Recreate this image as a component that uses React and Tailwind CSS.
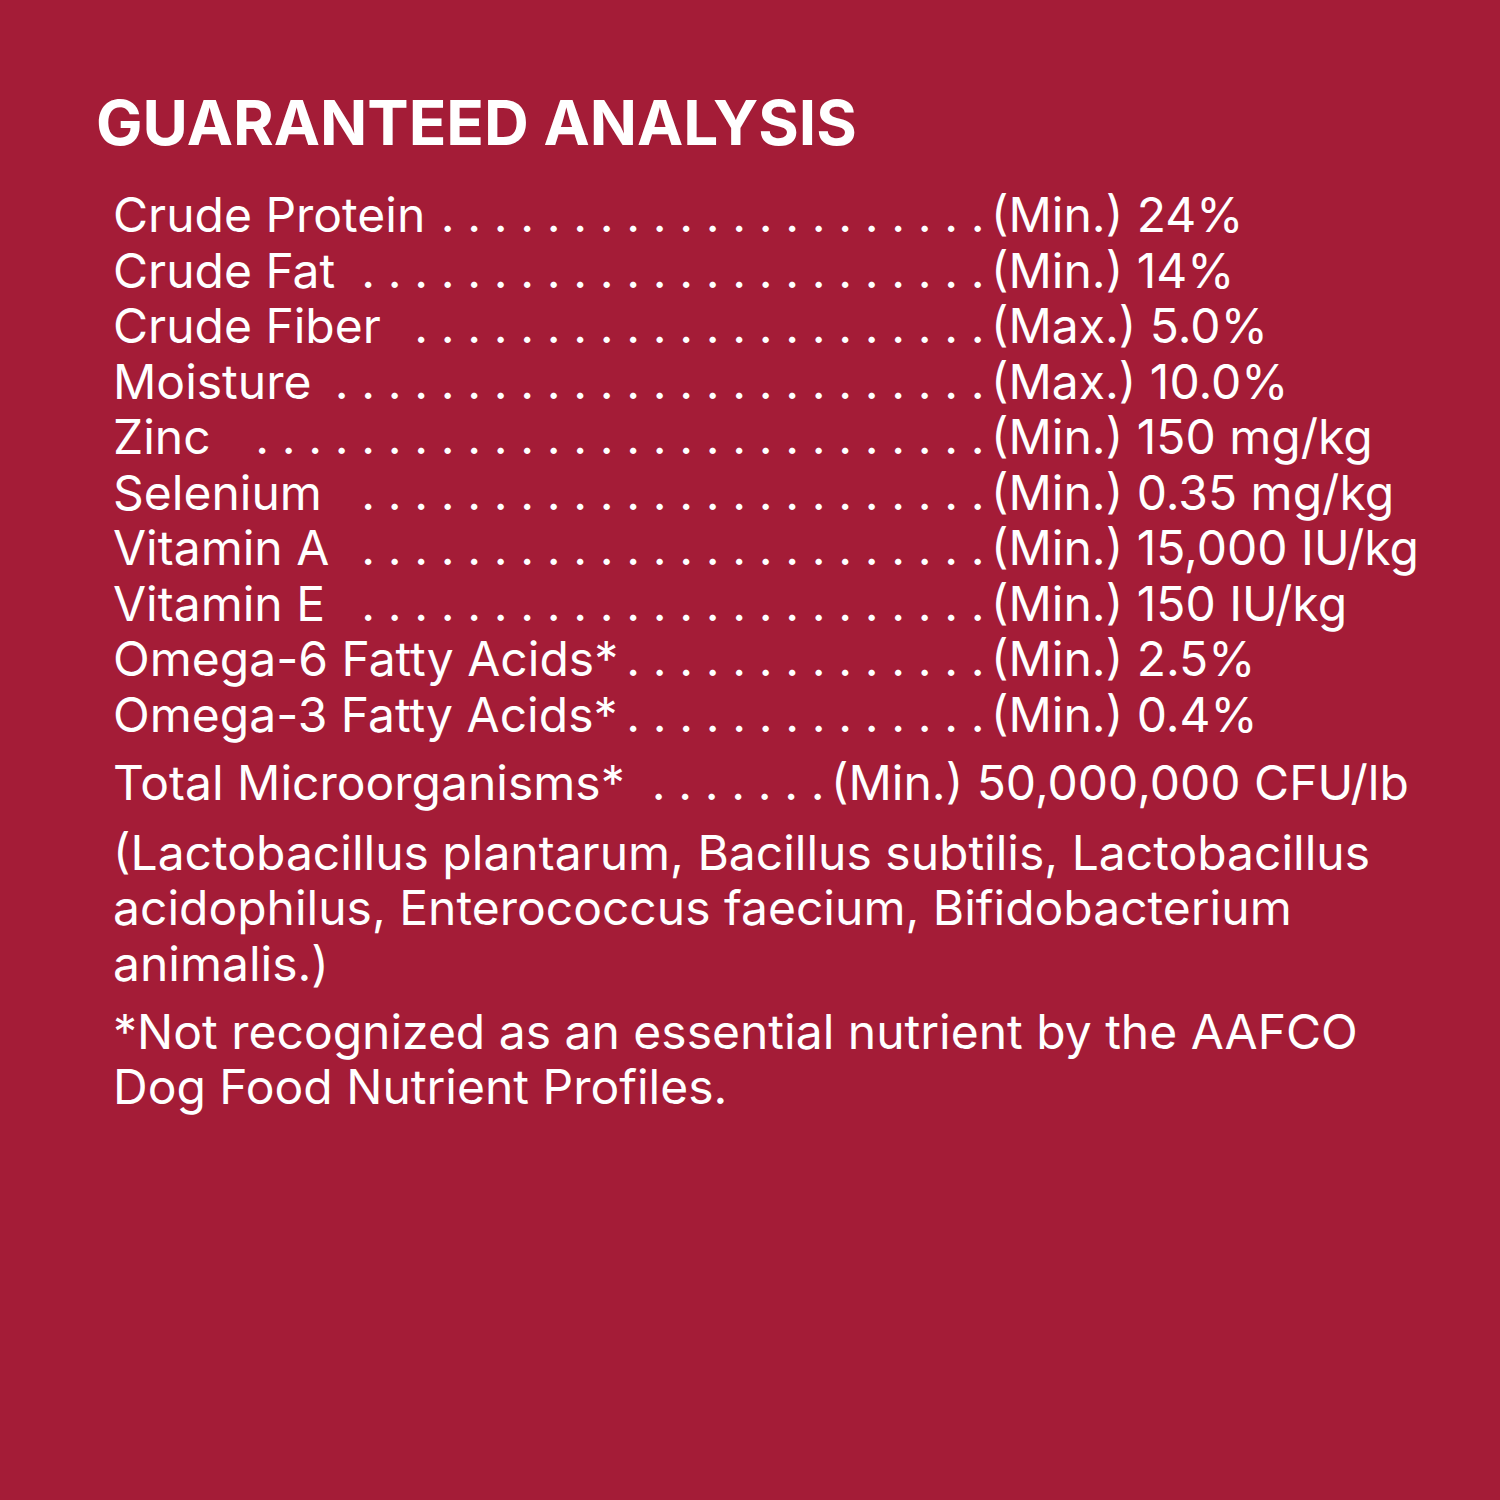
import React from 'react';

const rows = [
  { label: 'Crude Protein', dots: 21, value: '(Min.) 24%' },
  { label: 'Crude Fat', dots: 24, value: '(Min.) 14%' },
  { label: 'Crude Fiber', dots: 22, value: '(Max.) 5.0%' },
  { label: 'Moisture', dots: 25, value: '(Max.) 10.0%' },
  { label: 'Zinc', dots: 28, value: '(Min.) 150 mg/kg' },
  { label: 'Selenium', dots: 24, value: '(Min.) 0.35 mg/kg' },
  { label: 'Vitamin A', dots: 24, value: '(Min.) 15,000 IU/kg' },
  { label: 'Vitamin E', dots: 24, value: '(Min.) 150 IU/kg' },
  { label: 'Omega-6 Fatty Acids*', dots: 14, value: '(Min.) 2.5%' },
  { label: 'Omega-3 Fatty Acids*', dots: 14, value: '(Min.) 0.4%' },
];

// dot leader, right aligned against the value column
const Leader = ({ count }) => (
  <div className="flex-1 flex justify-end">
    {Array.from({ length: count }).map((_, i) => (
      <span key={i} className="w-[26.5px] shrink-0 text-center">.</span>
    ))}
  </div>
);

const Row = ({ label, dots, value, width }) => (
  <div className="flex whitespace-nowrap">
    <div className={`flex ${width}`}>
      <span>{label}</span>
      <Leader count={dots} />
    </div>
    <span>{value}</span>
  </div>
);

export default function App() {
  return (
    <div
      className="w-[1500px] h-[1500px] bg-[#a41c37] text-white overflow-hidden"
      style={{ fontFamily: 'Inter, "Open Sans", sans-serif' }}
    >
      <div className="pt-[88px] pl-[96px]">
        <h1 className="text-[62px] leading-[70px] font-bold">GUARANTEED ANALYSIS</h1>
      </div>
      <div className="pl-[113px] pt-[29px] text-[48px] leading-[55.5px]">
        {rows.map((r) => (
          <Row key={r.label} {...r} width="w-[878px]" />
        ))}
        <div className="mt-[12.5px]">
          <Row label="Total Microorganisms*" dots={7} value="(Min.) 50,000,000 CFU/lb" width="w-[718px]" />
        </div>
        <p className="mt-[14.5px]">
          <span className="block whitespace-nowrap">(Lactobacillus plantarum, Bacillus subtilis, Lactobacillus</span>
          <span className="block whitespace-nowrap">acidophilus, Enterococcus faecium, Bifidobacterium</span>
          <span className="block whitespace-nowrap">animalis.)</span>
        </p>
        <p className="mt-[12.5px]">
          <span className="block whitespace-nowrap">*Not recognized as an essential nutrient by the AAFCO</span>
          <span className="block whitespace-nowrap">Dog Food Nutrient Profiles.</span>
        </p>
      </div>
    </div>
  );
}
